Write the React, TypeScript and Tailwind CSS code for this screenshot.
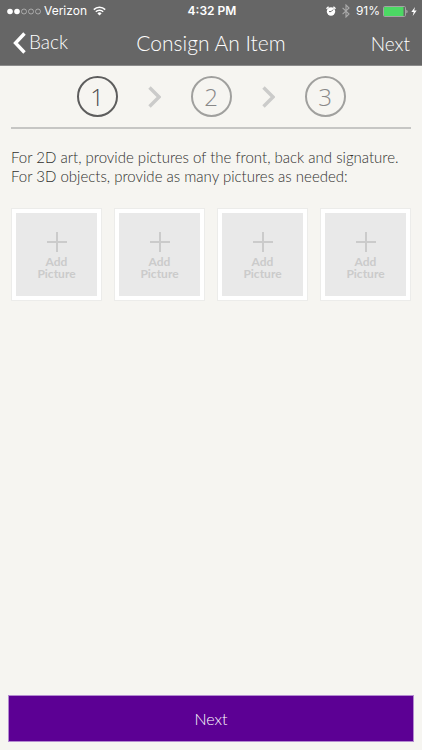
import { Fragment } from 'react';

const steps = [1, 2, 3];
const slots = ['front', 'back', 'signature', 'extra'];

function StatusBar() {
  return (
    <div className="grid h-5 grid-cols-3 items-center pl-[7px] pr-[5px] pt-[2px] font-['Inter','Liberation_Sans',sans-serif] text-xs">
      <div className="flex items-center gap-[3px]">
        <svg width="34" height="7" viewBox="0 0 34 7" aria-hidden="true">
          <circle cx="3" cy="3.5" r="2.8" fill="#fff" />
          <circle cx="10" cy="3.5" r="2.8" fill="#fff" />
          <g fill="none" stroke="#c4c4c4" strokeWidth="0.7">
            <circle cx="17" cy="3.5" r="2.5" />
            <circle cx="24" cy="3.5" r="2.5" />
            <circle cx="31" cy="3.5" r="2.5" />
          </g>
        </svg>
        <span>Verizon</span>
        <svg className="ml-[3px]" width="13" height="10" viewBox="0 0 13 10" aria-hidden="true">
          <g fill="none" stroke="#fff" strokeWidth="1.5">
            <path d="M0.8 3.6a8.1 8.1 0 0 1 11.4 0" />
            <path d="M2.8 5.8a5.2 5.2 0 0 1 7.4 0" />
          </g>
          <path d="M6.5 9.5 4.4 7.4a3 3 0 0 1 4.2 0Z" fill="#fff" />
        </svg>
      </div>
      <div className="text-center font-semibold">4:32 PM</div>
      <div className="flex items-center justify-end gap-[3px]">
        <svg width="10" height="10" viewBox="0 0 10 10" aria-hidden="true">
          <circle cx="5" cy="5.5" r="4.2" fill="#fff" />
          <path d="M0.5 2.7 2.6 0.8M9.5 2.7 7.4 0.8" stroke="#fff" strokeWidth="1.4" />
          <path d="M3 5.6H5.1L7.1 3.6" fill="none" stroke="#666" strokeWidth="1" />
        </svg>
        <svg className="mx-[3px]" width="8" height="14" viewBox="0 0 8 14" aria-hidden="true">
          <path d="M0.6 3.8 7 10 4 13V1L7 4 0.6 10.2" fill="none" stroke="#aaa" strokeWidth="1.1" />
        </svg>
        <span>91%</span>
        <svg width="25" height="11" viewBox="0 0 25 11" aria-hidden="true">
          <rect x="0.5" y="0.5" width="22" height="10" rx="1.2" fill="none" stroke="#a3a3a3" />
          <rect x="1" y="1" width="19.5" height="9" rx="0.6" fill="#4cd964" />
          <path d="M23.5 3.7c1.3 0.4 1.3 3.2 0 3.6Z" fill="#ccc" />
        </svg>
        <svg width="6" height="9" viewBox="0 0 6 9" aria-hidden="true">
          <path d="M4 0 0.3 5H2.7L1.7 9 5.7 3.6H3.2Z" fill="#fff" />
        </svg>
      </div>
    </div>
  );
}

function StepChevron() {
  return (
    <svg className="mx-[30px]" width="13" height="22" viewBox="0 0 13 22" aria-hidden="true">
      <path d="M1.5 1.5 11 11 1.5 20.5" fill="none" stroke="#cbcbca" strokeWidth="3.4" />
    </svg>
  );
}

function AddPicture({ name }: { name: string }) {
  return (
    <button
      type="button"
      aria-label={`Add Picture ${name}`}
      className="h-[93px] border border-[#ececea] bg-white p-1"
    >
      <span className="flex h-full flex-col items-center bg-[#e9e9e9] pt-[18px] text-xs leading-3 font-bold text-[#cbcbcb]">
        <svg className="mb-[3px]" width="22" height="22" viewBox="0 0 22 22" aria-hidden="true">
          <path d="M11 1v20M1 11h20" stroke="#cbcbcb" strokeWidth="2" />
        </svg>
        <span className="w-12 text-center">Add Picture</span>
      </span>
    </button>
  );
}

export default function App() {
  return (
    <div className="flex min-h-screen flex-col bg-[#f6f5f1] font-['Lato','Liberation_Sans',sans-serif]">
      <header className="border-b border-[#8c8c8c] bg-[#666] text-white">
        <StatusBar />
        <div className="grid h-[45px] grid-cols-[1fr_auto_1fr] items-center px-3 text-[19px] font-light">
          <button type="button" className="flex items-center gap-[3px] justify-self-start">
            <svg width="14" height="22" viewBox="0 0 14 22" aria-hidden="true">
              <path d="M12.5 1.5 3.5 11 12.5 20.5" fill="none" stroke="#fff" strokeWidth="3.4" />
            </svg>
            Back
          </button>
          <h1 className="text-[21px]">Consign An Item</h1>
          <button type="button" className="justify-self-end pt-1">Next</button>
        </div>
      </header>

      <main className="px-[11px]">
        <div className="flex items-center justify-center border-b-2 border-[#c6c6c4] py-[10px] font-['Open_Sans','Liberation_Sans',sans-serif]">
          {steps.map((step, i) => (
            <Fragment key={step}>
              {i > 0 && <StepChevron />}
              <div
                className={
                  step === 1
                    ? 'flex size-[41px] items-center justify-center rounded-full border-2 border-[#5d5d5d] text-2xl font-light text-[#4d4d4d]'
                    : 'flex size-[41px] items-center justify-center rounded-full border-2 border-[#a0a09e] text-2xl font-light text-[#888]'
                }
              >
                {step}
              </div>
            </Fragment>
          ))}
        </div>

        <p className="mt-[19px] text-[15px] leading-[19px] font-light text-[#30302e]">
          For 2D art, provide pictures of the front, back and signature.
          <br />
          For 3D objects, provide as many pictures as needed:
        </p>

        <div className="mt-[22px] grid grid-cols-4 gap-3">
          {slots.map((slot) => (
            <AddPicture key={slot} name={slot} />
          ))}
        </div>
      </main>

      <footer className="mt-auto px-2 pb-2">
        <button
          type="button"
          className="h-[47px] w-full border border-[#b48bd0] bg-[#5c0094] text-base font-light text-white"
        >
          Next
        </button>
      </footer>
    </div>
  );
}
